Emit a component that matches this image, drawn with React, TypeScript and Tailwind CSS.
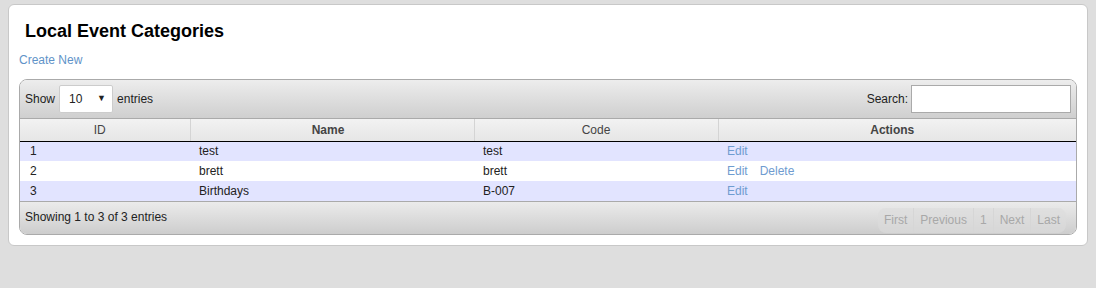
import React from 'react';

const rows = [
  { id: 1, name: 'test', code: 'test', canDelete: false },
  { id: 2, name: 'brett', code: 'brett', canDelete: true },
  { id: 3, name: 'Birthdays', code: 'B-007', canDelete: false },
];

const pages = ['First', 'Previous', '1', 'Next', 'Last'];

export default function App() {
  return (
    <div className="min-h-[288px] bg-[#dedede] pt-[4px] pl-[8px] pr-[8px] font-['Liberation_Sans',Arial,sans-serif]">
      <div className="w-[1080px] rounded-[6px] border border-[#c8c8c8] bg-white pl-[10px] pr-[10px] pb-[10px]">
        <h1 className="pl-[6px] pt-[16px] text-[18px] font-bold leading-[20px] text-black">Local Event Categories</h1>
        <a href="#" className="mt-[12px] block text-[12px] leading-[14px] text-[#5f93c8]">Create New</a>

        {/* table wrapper */}
        <div className="mt-[12px] overflow-hidden rounded-[8px] border border-[#aaaaaa] text-[12px] text-[#222]">
          <div className="flex h-[39px] items-center justify-between border-b border-[#aaaaaa] bg-gradient-to-b from-[#ededed] to-[#cfcfcf] pl-[5px] pr-[5px]">
            <div className="flex items-center gap-[4px]">
              <span>Show</span>
              <div className="flex h-[28px] w-[54px] items-center justify-between rounded-[2px] border border-[#cccccc] bg-white pl-[9px] pr-[6px] text-[12px]">
                <span>10</span>
                <span className="text-[9px]">▼</span>
              </div>
              <span>entries</span>
            </div>
            <div className="flex items-center gap-[3px]">
              <span>Search:</span>
              <div className="h-[28px] w-[160px] border border-[#aaaaaa] bg-white" />
            </div>
          </div>

          <table className="w-full table-fixed border-collapse">
            <colgroup>
              <col className="w-[170px]" />
              <col className="w-[284px]" />
              <col className="w-[244px]" />
              <col />
            </colgroup>
            <thead>
              <tr className="h-[22px] bg-gradient-to-b from-[#f2f2f2] to-[#e6e6e6] text-[#444]">
                <th className="border-r border-[#d4d4d4] border-b border-b-black pr-[10px] font-normal">ID</th>
                <th className="border-r border-[#d4d4d4] border-b border-b-black pr-[8px] font-bold">Name</th>
                <th className="border-r border-[#d4d4d4] border-b border-b-black font-normal">Code</th>
                <th className="border-b border-b-black pr-[10px] font-bold">Actions</th>
              </tr>
            </thead>
            <tbody>
              {rows.map((r, i) => (
                <tr key={r.id} className={`h-[20px] ${i % 2 === 0 ? 'bg-[#e2e4ff]' : 'bg-white'}`}>
                  <td className="pl-[10px]">{r.id}</td>
                  <td className="pl-[9px]">{r.name}</td>
                  <td className="pl-[9px]">{r.code}</td>
                  <td className="pl-[9px] text-[#6f9cd0]">
                    <a href="#">Edit</a>
                    {r.canDelete && <a href="#" className="ml-[12px]">Delete</a>}
                  </td>
                </tr>
              ))}
            </tbody>
          </table>

          <div className="flex h-[33px] items-center justify-between border-t border-[#aaaaaa] bg-gradient-to-b from-[#ebebeb] to-[#cdcdcd] pl-[5px] pr-[10px]">
            <span className="-mt-[3px]">Showing 1 to 3 of 3 entries</span>
            <div className="mt-[4px] flex h-[25px] items-stretch rounded-[8px] bg-[#dcdcdc]/60 text-[#a8a8a8]">
              {pages.map((p, i) => (
                <span
                  key={p}
                  className={`flex items-center px-[6px] ${i < pages.length - 1 ? 'border-r border-[#d6d6d6]' : ''}`}
                >
                  {p}
                </span>
              ))}
            </div>
          </div>
        </div>
      </div>
    </div>
  );
}
